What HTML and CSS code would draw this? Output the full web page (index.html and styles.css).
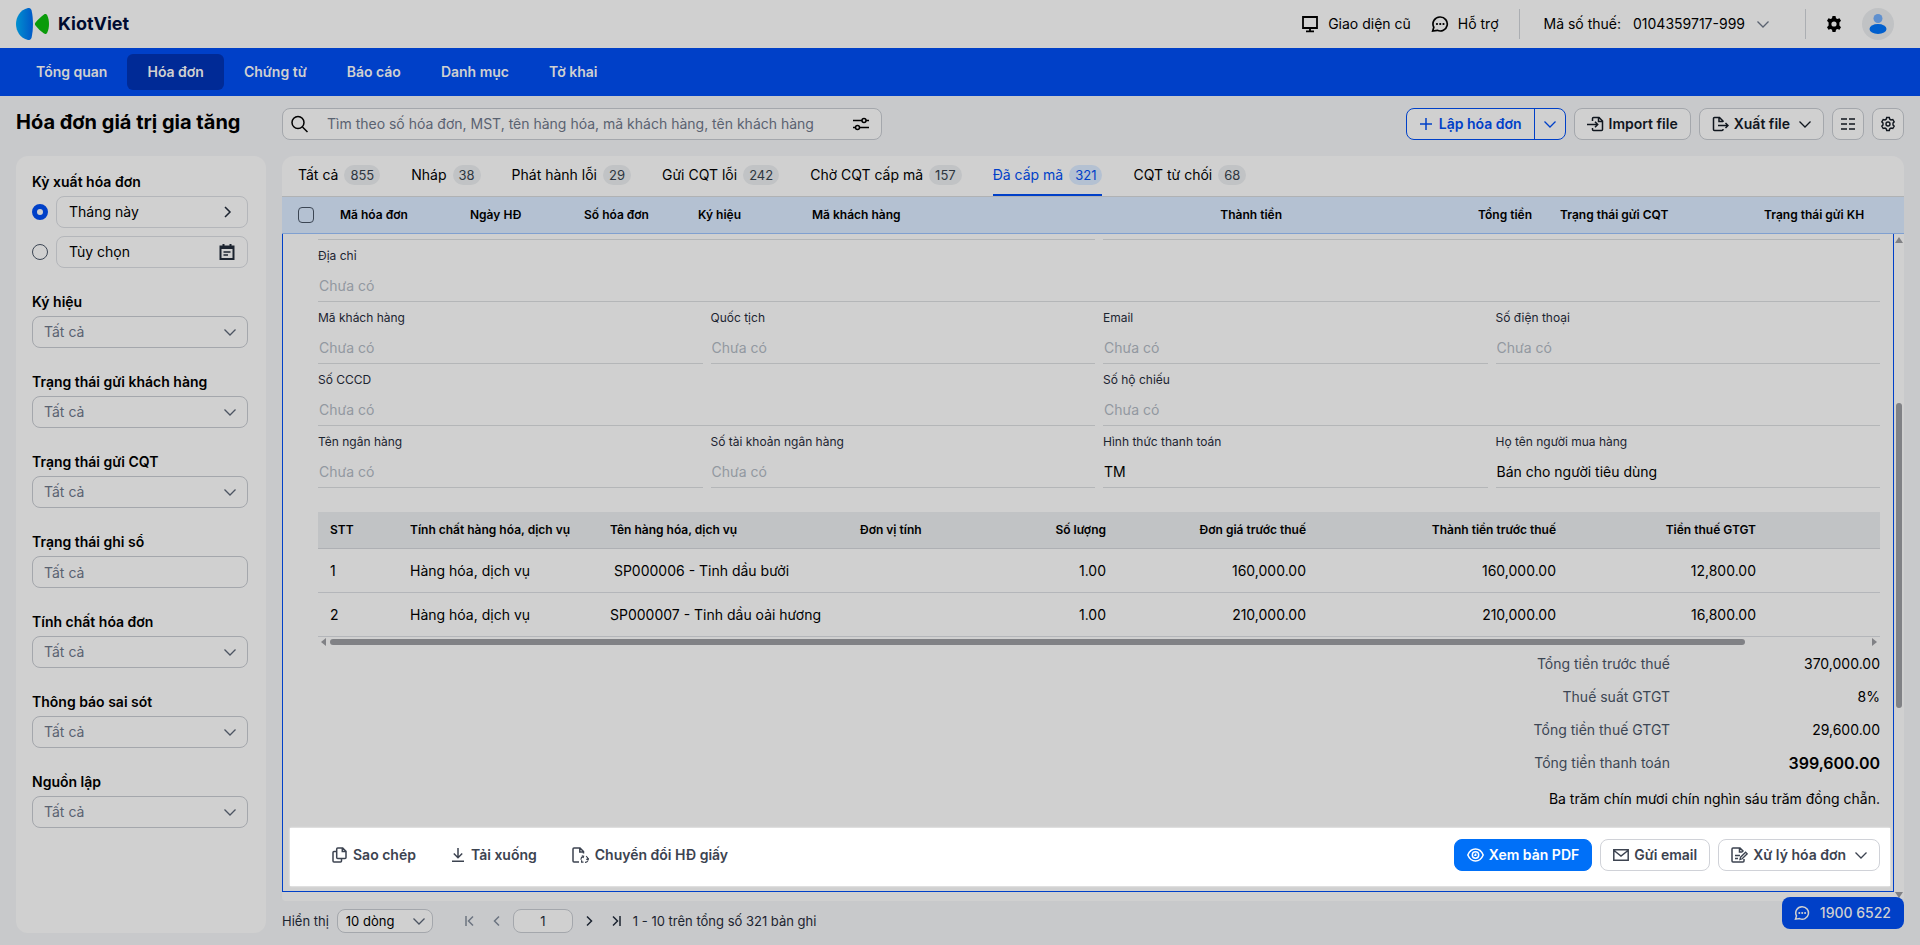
FILE: index.html
```html
<!DOCTYPE html>
<html lang="vi">
<head>
    <meta charset="UTF-8">
    <meta name="viewport" content="width=device-width, initial-scale=1.0">
    <title>Hóa đơn giá trị gia tăng</title>
    <link rel="stylesheet" href="styles.css">
</head>
<body>
    <!-- Icon dùng chung -->
    <svg class="sprite" aria-hidden="true">
        <symbol id="down" viewBox="0 0 12 12"><path d="M.5 3.500l5.500 5.500 5.500-5.500" stroke-width="1.300"/></symbol>
        <symbol id="chat" viewBox="0 0 16 16"><path d="M8.2 1.8a6.2 6.2 0 1 1-2.6 11.8L1.5 14.200l1-3.300A6.200 6.200 0 0 1 8.200 1.800z"/><path d="M5.200 8h.2M8.100 8h.2M11 8h.2" stroke-width="1.800" stroke-linecap="round"/></symbol>
    </svg>

    <header class="topbar">
        <a class="logo" href="#">
            <svg width="34" height="32" viewBox="0 0 34 32">
                <defs>
                    <linearGradient id="blue" x1="0" x2="1"><stop offset="0" stop-color="#0090cf"/><stop offset="1" stop-color="#0058c8"/></linearGradient>
                </defs>
                <path d="M12 0C4 2 0 9 0 16s4 14 12 16c2 0 3-.5 3.600-2.500 1.800-8 1.800-19 0-27C15 .500 14 0 12 0z" fill="url(#blue)"/>
                <path d="M19.500 14.500C22 11.500 25 8.500 28 6.500c1.500-.9 2.600-.5 3.300 1C32.500 10 33 13 33 16s-.5 6-1.700 8.500c-.7 1.500-1.800 1.900-3.300 1-3-2-6-5-8.500-8-.8-1-.8-2 0-3z" fill="#0a9b0a"/>
            </svg>
            <span>KiotViet</span>
        </a>
        <div class="top-right">
            <a class="top-link" href="#">
                <svg class="icon" width="18" height="18" viewBox="0 0 18 18"><path d="M2 2h14v11H2zM9 13v3M5 16.300h8" stroke-width="1.800"/></svg>
                Giao diện cũ
            </a>
            <a class="top-link" href="#"><svg class="icon" width="18" height="18"><use href="#chat"/></svg>Hỗ trợ</a>
            <span class="divider"></span>
            <button class="tax"><span>Mã số thuế:</span><span>0104359717-999</span><svg class="icon grey" width="12" height="12"><use href="#down"/></svg></button>
            <span class="divider"></span>
            <button class="plain" aria-label="Cài đặt">
                <svg width="16" height="16" viewBox="0 0 16 16"><path fill-rule="evenodd" d="M6.500 0h3l.5 2.200 1.300.7 2.200-.7L15 4.800 13.400 6.400v3.200L15 11.200l-1.500 2.600-2.200-.7-1.300.7-.5 2.200h-3L6 13.800l-1.300-.7-2.200.7L1 11.200l1.600-1.600V6.400L1 4.800l1.500-2.600 2.200.7L6 2.200zM8 5.400a2.600 2.600 0 1 0 0 5.200 2.600 2.600 0 0 0 0-5.200z"/></svg>
            </button>
            <button class="avatar" aria-label="Tài khoản">
                <svg width="32" height="32" viewBox="0 0 32 32"><circle cx="16" cy="10.500" r="4.500" fill="#5f90cf"/><ellipse cx="16" cy="21" rx="8.500" ry="5" fill="#005fce"/></svg>
            </button>
        </div>
    </header>

    <nav class="menu">
        <a href="#">Tổng quan</a>
        <a href="#" class="active">Hóa đơn</a>
        <a href="#">Chứng từ</a>
        <a href="#">Báo cáo</a>
        <a href="#">Danh mục</a>
        <a href="#">Tờ khai</a>
    </nav>

    <div class="page">
        <h1>Hóa đơn giá trị gia tăng</h1>

        <div class="toolbar">
            <div class="search">
                <svg class="icon" width="18" height="18" viewBox="0 0 18 18"><circle cx="7" cy="7.500" r="6"/><path d="M11.500 12l5 5"/></svg>
                <input type="text" aria-label="Tìm kiếm" placeholder="Tìm theo số hóa đơn, MST, tên hàng hóa, mã khách hàng, tên khách hàng">
                <button class="plain" aria-label="Bộ lọc">
                    <svg class="icon" width="16" height="14" viewBox="0 0 16 14"><path d="M0 3.500h9M13 3.500h3M0 10.500h2.500M6.500 10.500H16"/><circle cx="11" cy="3.500" r="2"/><circle cx="4.500" cy="10.500" r="2"/></svg>
                </button>
            </div>
            <div class="actions">
                <div class="split">
                    <button><svg class="icon" width="12" height="12" viewBox="0 0 12 12"><path d="M6 0v12M0 6h12"/></svg>Lập hóa đơn</button>
                    <button aria-label="Thêm lựa chọn"><svg class="icon" width="12" height="12"><use href="#down"/></svg></button>
                </div>
                <button class="btn"><svg class="icon" width="17" height="16" viewBox="0 0 17 16"><path d="M5.500 5V2.500a1 1 0 0 1 1-1h5.500L15.500 5v8.500a1 1 0 0 1-1 1h-8a1 1 0 0 1-1-1V12M11.500 1.500V5.500h4M0 8.500h10.500M8 5.800l2.700 2.700L8 11.200"/></svg>Import file</button>
                <button class="btn"><svg class="icon" width="17" height="16" viewBox="0 0 17 16"><path d="M11 6V5L7.500 1.500h-5a1 1 0 0 0-1 1v11a1 1 0 0 0 1 1H10a1 1 0 0 0 1-1V13M7 1.500V5.500h4M6 9.500h10M13.500 7l2.500 2.500-2.500 2.500"/></svg>Xuất file<svg class="icon caret" width="12" height="12"><use href="#down"/></svg></button>
                <button class="btn square" aria-label="Hiển thị cột"><svg class="icon" width="14" height="12" viewBox="0 0 14 12"><path d="M0 1h6M8 1h6M0 6h6M8 6h6M0 11h6M8 11h6" stroke-width="1.300"/></svg></button>
                <button class="btn square" aria-label="Thiết lập"><svg class="icon" width="16" height="16" viewBox="0 0 16 16"><path stroke-width="1.400" d="M6.700 1.500h2.600l.5 1.700 1.200.7 1.800-.4 1.400 2.300L13 7.100v1.800l1.200 1.300-1.400 2.300-1.800-.4-1.200.7-.5 1.700H6.700l-.5-1.700-1.200-.7-1.800.4-1.400-2.300L3 8.900V7.100L1.800 5.800l1.400-2.300 1.800.4 1.200-.7z"/><circle cx="8" cy="8" r="2" stroke-width="1.400"/></svg></button>
            </div>
        </div>

        <aside class="sidebar">
            <fieldset class="filter period">
                <legend>Kỳ xuất hóa đơn</legend>
                <div class="choice">
                    <input type="radio" name="period" aria-label="Tháng này" checked>
                    <button class="box">Tháng này<svg class="icon" width="16" height="12" viewBox="0 0 16 12"><path d="M6 1l5 5-5 5"/></svg></button>
                </div>
                <div class="choice">
                    <input type="radio" name="period" aria-label="Tùy chọn">
                    <button class="box">Tùy chọn<svg class="icon" width="16" height="16" viewBox="0 0 16 16"><path d="M1.500 2.500h13v12.500h-13zM1.500 4h13M4.500 0v3M11.500 0v3" stroke-width="2"/><path d="M4.500 8h7M4.500 11h4.500"/></svg></button>
                </div>
            </fieldset>
            <div class="filter">
                <label for="f1">Ký hiệu</label>
                <div class="select"><select id="f1"><option>Tất cả</option></select><svg class="icon" width="12" height="12"><use href="#down"/></svg></div>
            </div>
            <div class="filter">
                <label for="f2">Trạng thái gửi khách hàng</label>
                <div class="select"><select id="f2"><option>Tất cả</option></select><svg class="icon" width="12" height="12"><use href="#down"/></svg></div>
            </div>
            <div class="filter">
                <label for="f3">Trạng thái gửi CQT</label>
                <div class="select"><select id="f3"><option>Tất cả</option></select><svg class="icon" width="12" height="12"><use href="#down"/></svg></div>
            </div>
            <div class="filter">
                <label for="f4">Trạng thái ghi sổ</label>
                <div class="select"><input type="text" id="f4" placeholder="Tất cả"></div>
            </div>
            <div class="filter">
                <label for="f5">Tính chất hóa đơn</label>
                <div class="select"><select id="f5"><option>Tất cả</option></select><svg class="icon" width="12" height="12"><use href="#down"/></svg></div>
            </div>
            <div class="filter">
                <label for="f6">Thông báo sai sót</label>
                <div class="select"><select id="f6"><option>Tất cả</option></select><svg class="icon" width="12" height="12"><use href="#down"/></svg></div>
            </div>
            <div class="filter">
                <label for="f7">Nguồn lập</label>
                <div class="select"><select id="f7"><option>Tất cả</option></select><svg class="icon" width="12" height="12"><use href="#down"/></svg></div>
            </div>
        </aside>

        <main class="main">
            <div class="card">
                <div class="tabs">
                    <button>Tất cả <span>855</span></button>
                    <button>Nháp <span>38</span></button>
                    <button>Phát hành lỗi <span>29</span></button>
                    <button>Gửi CQT lỗi <span>242</span></button>
                    <button>Chờ CQT cấp mã <span>157</span></button>
                    <button class="active">Đã cấp mã <span>321</span></button>
                    <button>CQT từ chối <span>68</span></button>
                </div>

                <table class="list">
                    <thead>
                        <tr>
                            <th class="w-check"><input type="checkbox" aria-label="Chọn tất cả"></th>
                            <th class="w-code">Mã hóa đơn</th>
                            <th class="w-short">Ngày HĐ</th>
                            <th class="w-short">Số hóa đơn</th>
                            <th class="w-short">Ký hiệu</th>
                            <th>Mã khách hàng</th>
                            <th class="w-money num">Thành tiền</th>
                            <th class="w-money num">Tổng tiền</th>
                            <th class="w-status">Trạng thái gửi CQT</th>
                            <th class="w-last">Trạng thái gửi KH</th>
                        </tr>
                    </thead>
                </table>

                <div class="scroll-area">
                    <section class="detail">
                        <div class="fields">
                            <div class="field half cut"></div>
                            <div class="field half cut"></div>
                            <div class="field full"><label for="d1">Địa chỉ</label><input type="text" id="d1" placeholder="Chưa có"></div>
                            <div class="field"><label for="d2">Mã khách hàng</label><input type="text" id="d2" placeholder="Chưa có"></div>
                            <div class="field"><label for="d3">Quốc tịch</label><input type="text" id="d3" placeholder="Chưa có"></div>
                            <div class="field"><label for="d4">Email</label><input type="text" id="d4" placeholder="Chưa có"></div>
                            <div class="field"><label for="d5">Số điện thoại</label><input type="text" id="d5" placeholder="Chưa có"></div>
                            <div class="field half"><label for="d6">Số CCCD</label><input type="text" id="d6" placeholder="Chưa có"></div>
                            <div class="field half"><label for="d7">Số hộ chiếu</label><input type="text" id="d7" placeholder="Chưa có"></div>
                            <div class="field"><label for="d8">Tên ngân hàng</label><input type="text" id="d8" placeholder="Chưa có"></div>
                            <div class="field"><label for="d9">Số tài khoản ngân hàng</label><input type="text" id="d9" placeholder="Chưa có"></div>
                            <div class="field"><label for="d10">Hình thức thanh toán</label><input type="text" id="d10" value="TM"></div>
                            <div class="field"><label for="d11">Họ tên người mua hàng</label><input type="text" id="d11" value="Bán cho người tiêu dùng"></div>
                        </div>

                        <table class="items">
                            <thead>
                                <tr>
                                    <th class="c-stt">STT</th>
                                    <th class="c-200">Tính chất hàng hóa, dịch vụ</th>
                                    <th class="c-250">Tên hàng hóa, dịch vụ</th>
                                    <th class="c-unit">Đơn vị tính</th>
                                    <th class="c-qty num">Số lượng</th>
                                    <th class="c-200 num">Đơn giá trước thuế</th>
                                    <th class="c-250 num">Thành tiền trước thuế</th>
                                    <th class="c-200 num">Tiền thuế GTGT</th>
                                    <th></th>
                                </tr>
                            </thead>
                            <tbody>
                                <tr>
                                    <td>1</td>
                                    <td>Hàng hóa, dịch vụ</td>
                                    <td>&nbsp;SP000006 - Tinh dầu bưởi</td>
                                    <td></td>
                                    <td class="num">1.00</td>
                                    <td class="num">160,000.00</td>
                                    <td class="num">160,000.00</td>
                                    <td class="num">12,800.00</td>
                                    <td></td>
                                </tr>
                                <tr>
                                    <td>2</td>
                                    <td>Hàng hóa, dịch vụ</td>
                                    <td>SP000007 - Tinh dầu oải hương</td>
                                    <td></td>
                                    <td class="num">1.00</td>
                                    <td class="num">210,000.00</td>
                                    <td class="num">210,000.00</td>
                                    <td class="num">16,800.00</td>
                                    <td></td>
                                </tr>
                            </tbody>
                        </table>
                        <div class="hscroll">
                            <svg width="6" height="8" viewBox="0 0 6 8"><path d="M6 0v8L1 4z"/></svg>
                            <div class="track"><div class="thumb"></div></div>
                            <svg width="6" height="8" viewBox="0 0 6 8"><path d="M0 0v8l5-4z"/></svg>
                        </div>

                        <dl class="totals">
                            <dt>Tổng tiền trước thuế</dt><dd>370,000.00</dd>
                            <dt>Thuế suất GTGT</dt><dd>8%</dd>
                            <dt>Tổng tiền thuế GTGT</dt><dd>29,600.00</dd>
                            <dt>Tổng tiền thanh toán</dt><dd class="grand">399,600.00</dd>
                        </dl>
                        <p class="in-words">Ba trăm chín mươi chín nghìn sáu trăm đồng chẵn.</p>

                        <div class="action-bar">
                            <button class="link-btn"><svg class="icon" width="15" height="16" viewBox="0 0 15 16"><path d="M5.700 1h5L14 4.200v6.300a1 1 0 0 1-1 1H5.700a1 1 0 0 1-1-1V2a1 1 0 0 1 1-1zM10.300 1v3.500H14M4.500 4.500H2a1 1 0 0 0-1 1V14a1 1 0 0 0 1 1h6.500a1 1 0 0 0 1-1v-2.300"/></svg>Sao chép</button>
                            <button class="link-btn"><svg class="icon" width="14" height="16" viewBox="0 0 14 16"><path d="M7 1v9.500M2.800 6.500L7 10.700l4.200-4.200M1 14.300h12"/></svg>Tải xuống</button>
                            <button class="link-btn"><svg class="icon" width="17" height="16" viewBox="0 0 17 16"><path d="M7 15H2a1 1 0 0 1-1-1V2a1 1 0 0 1 1-1h6l3.500 3.500V6.500M7.800 1v4h3.700"/><path d="M9 12.800a3.300 3.300 0 0 1 2.300-3.500M9.800 8.800l1.800.4-.6 1.800M11.500 15.200H9.600v-1.900M14 9.300a3.300 3.300 0 0 1 2 3.200M16.800 11.200L16 12.900l-1.700-.8M13 15.400a3.300 3.300 0 0 0 2.800-1.400" stroke-width="1.200"/></svg>Chuyển đổi HĐ giấy</button>
                            <span class="spacer"></span>
                            <button class="btn primary"><svg class="icon" width="17" height="16" viewBox="0 0 17 16"><path d="M.8 8C2.500 4 5.300 2 8.500 2s6 2 7.700 6c-1.700 4-4.500 6-7.700 6S2.500 12 .8 8z"/><circle cx="8.500" cy="8" r="3.200"/><path d="M8.700 6.500v1.700H7.200"/></svg>Xem bản PDF</button>
                            <button class="btn light"><svg class="icon" width="16" height="12" viewBox="0 0 16 12"><path d="M.8.800h14.400v10.400H.8zM1 1.500l7 5.500 7-5.500"/></svg>Gửi email</button>
                            <button class="btn light"><svg class="icon" width="17" height="16" viewBox="0 0 17 16"><path d="M13 12v2a1 1 0 0 1-1 1H2a1 1 0 0 1-1-1V2a1 1 0 0 1 1-1h7l3.500 3.500M8.500 1v4h3M4 8.500h5M4 11.500h3"/><path d="M9 12.500l.6-2.300 5-5 1.600 1.600-5 5z" stroke-width="1.300"/></svg>Xử lý hóa đơn<svg class="icon caret" width="12" height="12"><use href="#down"/></svg></button>
                        </div>
                    </section>
                    <div class="vscroll">
                        <svg width="8" height="6" viewBox="0 0 8 6"><path d="M0 6h8L4 0z"/></svg>
                        <div class="track"><div class="thumb"></div></div>
                        <svg width="8" height="6" viewBox="0 0 8 6"><path d="M0 0h8L4 6z"/></svg>
                    </div>
                </div>
            </div>

            <div class="pager">
                <label for="size">Hiển thị</label>
                <div class="select small"><select id="size"><option>10 dòng</option></select><svg class="icon" width="12" height="12"><use href="#down"/></svg></div>
                <div class="pages">
                    <button class="plain muted" aria-label="Trang đầu"><svg class="icon" width="12" height="12" viewBox="0 0 12 12"><path d="M3 1v10M10 1.500L5.500 6l4.500 4.500"/></svg></button>
                    <button class="plain muted" aria-label="Trang trước"><svg class="icon" width="12" height="12" viewBox="0 0 12 12"><path d="M8 1.500L3.500 6 8 10.500"/></svg></button>
                    <input type="text" aria-label="Trang" value="1">
                    <button class="plain" aria-label="Trang sau"><svg class="icon" width="12" height="12" viewBox="0 0 12 12"><path d="M4 1.500L8.500 6 4 10.500"/></svg></button>
                    <button class="plain" aria-label="Trang cuối"><svg class="icon" width="12" height="12" viewBox="0 0 12 12"><path d="M2 1.500L6.500 6 2 10.500M9 1v10"/></svg></button>
                </div>
                <span>1 - 10 trên tổng số 321 bản ghi</span>
            </div>
        </main>
    </div>

    <button class="hotline"><svg class="icon" width="16" height="16"><use href="#chat"/></svg>1900 6522</button>
</body>
</html>
```
FILE: styles.css
```css
* {
    box-sizing: border-box;
}

body {
    margin: 0;
    min-height: 100vh;
    display: flex;
    flex-direction: column;
    background: #c8c9cb;
    color: #000;
    font-family: Inter, "Liberation Sans", sans-serif;
    font-size: 14px;
    line-height: 20px;
}

button, input, select {
    font: inherit;
    color: inherit;
    margin: 0;
}

button {
    cursor: pointer;
}

.sprite {
    display: none;
}

.icon {
    fill: none;
    stroke: currentColor;
    stroke-width: 1.5;
    flex: none;
}

.plain {
    display: flex;
    padding: 0;
    border: 0;
    background: none;
}

/* Thanh trên cùng */
.topbar {
    height: 48px;
    padding: 0 26px 0 16px;
    display: flex;
    align-items: center;
    justify-content: space-between;
    background: #d0d0d0;
}

.logo {
    display: flex;
    align-items: center;
    gap: 8px;
    color: #000b30;
    font-size: 18px;
    font-weight: 700;
    text-decoration: none;
}

.top-right {
    display: flex;
    align-items: center;
    gap: 20px;
}

.top-link {
    display: flex;
    align-items: center;
    gap: 9px;
    color: #000;
    text-decoration: none;
}

.divider {
    width: 1px;
    height: 30px;
    background: #abaeb2;
}

.tax {
    display: flex;
    align-items: center;
    gap: 12px;
    padding: 0 16px 0 4px;
    border: 0;
    background: none;
}

.grey {
    color: #5a6270;
}

.avatar {
    display: flex;
    width: 32px;
    height: 32px;
    padding: 0;
    border: 0;
    border-radius: 50%;
    background: #c0c2c4;
}

/* Menu chính */
.menu {
    height: 48px;
    padding: 6px 16px;
    display: flex;
    background: #0040c8;
}

.menu a {
    padding: 8px 20px;
    border-radius: 6px;
    color: #d0d0d0;
    font-weight: 600;
    text-decoration: none;
}

.menu a.active {
    background: #002a96;
}

/* Khung trang */
.page {
    flex: 1;
    display: grid;
    grid-template-columns: 250px minmax(0, 1fr);
    grid-template-rows: 32px 1fr;
    gap: 16px;
    padding: 12px 16px;
}

h1 {
    margin: 0;
    font-size: 20px;
    line-height: 28px;
    font-weight: 700;
    white-space: nowrap;
}

.toolbar, .actions {
    display: flex;
    gap: 8px;
}

.toolbar {
    justify-content: space-between;
}

.search {
    flex: 0 1 600px;
    height: 32px;
    display: flex;
    align-items: center;
    padding: 0 12px 0 8px;
    border: 1px solid #a4a7ac;
    border-radius: 8px;
    background: #d0d0d0;
}

.search input {
    flex: 1;
    padding: 0 18px;
    border: 0;
    outline: 0;
    background: none;
}

.search input::placeholder {
    color: #5a6270;
}

.btn {
    height: 32px;
    display: flex;
    align-items: center;
    gap: 5px;
    padding: 0 12px;
    border: 1px solid #a4a7ac;
    border-radius: 8px;
    background: #d0d0d0;
    color: #10161e;
    font-weight: 600;
    white-space: nowrap;
}

.caret {
    margin-left: 4px;
}

.square {
    width: 32px;
    padding: 0;
    justify-content: center;
}

.split {
    display: flex;
    height: 32px;
    border: 1px solid #0040c8;
    border-radius: 8px;
    background: #d0d0d0;
}

.split button {
    display: flex;
    align-items: center;
    gap: 7px;
    padding: 0 12px 0 13px;
    border: 0;
    background: none;
    color: #0040c8;
    font-weight: 600;
}

.split button + button {
    padding: 0 9px;
    border-left: 1px solid #0040c8;
}

/* Bộ lọc bên trái */
.sidebar {
    padding: 16px 18px 16px 16px;
    border-radius: 12px;
    background: #d0d0d0;
}

.filter {
    margin: 0 0 24px;
    padding: 0;
    border: 0;
}

.filter label, .filter legend {
    display: block;
    height: 20px;
    margin-bottom: 4px;
    padding: 0;
    font-weight: 600;
    line-height: 20px;
}

.choice {
    display: flex;
    align-items: center;
    gap: 8px;
}

.choice + .choice {
    margin-top: 8px;
}

.choice input {
    appearance: none;
    width: 16px;
    height: 16px;
    border: 1px solid #3c4654;
    border-radius: 50%;
}

.choice input:checked {
    border: 5px solid #0040c8;
}

.box {
    flex: 1;
    height: 32px;
    display: flex;
    align-items: center;
    justify-content: space-between;
    padding: 0 12px;
    border: 1px solid #b4b6ba;
    border-radius: 8px;
    background: none;
    color: #000;
}

.box .icon {
    color: #1c2430;
}

.select {
    position: relative;
}

.select select, .select input {
    appearance: none;
    display: block;
    width: 100%;
    height: 32px;
    padding: 0 11px;
    border: 1px solid #a4a7ac;
    border-radius: 8px;
    background: #d0d0d0;
    color: #5a6270;
}

.select input::placeholder {
    color: #5a6270;
}

.select .icon {
    position: absolute;
    right: 12px;
    top: 10px;
    color: #4c5462;
    pointer-events: none;
}

/* Danh sách */
.main {
    display: flex;
    flex-direction: column;
    gap: 8px;
}

.card {
    flex: 1;
    display: flex;
    flex-direction: column;
    border-radius: 12px 12px 4px 4px;
    background: #d0d0d0;
}

.tabs {
    height: 41px;
    display: flex;
    gap: 31px;
    padding: 0 16px;
    border-bottom: 1px solid #b0b2b4;
}

.tabs button {
    display: flex;
    align-items: center;
    gap: 6px;
    padding: 0;
    border: 0;
    border-bottom: 2px solid transparent;
    background: none;
    white-space: nowrap;
}

.tabs span {
    padding: 0 6px;
    border-radius: 10px;
    background: #c1c3c5;
    color: #2e3640;
    font-size: 13px;
}

.tabs .active {
    border-color: #0040c8;
    color: #0040c8;
}

.tabs .active span {
    background: #b4c1d2;
    color: #0040c8;
}

table {
    width: 100%;
    table-layout: fixed;
    border-collapse: collapse;
}

th {
    height: 36px;
    font-size: 12px;
    font-weight: 600;
    line-height: 16px;
    text-align: left;
    white-space: nowrap;
}

.num {
    text-align: right;
}

.list th {
    padding: 0 14px;
    border-bottom: 1px solid #80a0d0;
    background: #b4c1d2;
}

.list .w-check {
    width: 44px;
    padding: 0 12px 0 16px;
}

.w-code { width: 130px; }
.w-short { width: 114px; }
.w-money { width: 250px; }
.w-status { width: 204px; }
.w-last { width: 154px; }

.list input {
    appearance: none;
    display: block;
    width: 16px;
    height: 16px;
    border: 1px solid #3c4654;
    border-radius: 4px;
}

.scroll-area {
    flex: 1;
    display: flex;
    padding-bottom: 9px;
}

.detail {
    flex: 1;
    min-width: 0;
    display: flex;
    flex-direction: column;
    padding: 0 3px 5px 7px;
    border: 1px solid #0040c8;
    border-top: 0;
}

.fields {
    display: grid;
    grid-template-columns: repeat(4, 1fr);
    gap: 0 8px;
    margin: 0 10px 0 28px;
}

.field {
    height: 62px;
    padding-top: 8px;
    border-bottom: 1px solid #b4b6b8;
    line-height: 16px;
}

.half { grid-column: span 2; }
.full { grid-column: span 4; }

.cut {
    height: 6px;
    padding: 0;
}

.field label {
    display: block;
    color: #1c2430;
    font-size: 12px;
}

.field input {
    display: block;
    width: 100%;
    height: 30px;
    margin-top: 7px;
    padding: 0 1px;
    border: 0;
    outline: 0;
    background: none;
}

.field input::placeholder {
    color: #9298a0;
}

/* Bảng hàng hóa */
.items {
    width: auto;
    margin: 24px 10px 0 28px;
}

.items th {
    height: 37px;
    padding: 0 12px;
    border-bottom: 1px solid #aeb0b4;
    background: #c1c3c5;
}

.items td {
    height: 44px;
    padding: 0 12px;
    border-bottom: 1px solid #b4b6ba;
}

.c-stt { width: 80px; }
.c-200 { width: 200px; }
.c-250 { width: 250px; }
.c-unit { width: 150px; }
.c-qty { width: 120px; }

.hscroll {
    display: flex;
    align-items: center;
    gap: 4px;
    height: 10px;
    margin: 0 12px 0 30px;
}

.hscroll svg, .vscroll svg {
    flex: none;
    fill: #808185;
}

.track {
    flex: 1;
}

.thumb {
    border-radius: 3px;
    background: #808185;
}

.hscroll .thumb {
    width: 92%;
    height: 6px;
}

.vscroll {
    width: 10px;
    display: flex;
    flex-direction: column;
    align-items: center;
    padding-top: 3px;
    margin-bottom: -6px;
}

.vscroll .thumb {
    width: 6px;
    height: 47%;
    margin: 160px 0 0;
}

.totals {
    display: grid;
    grid-template-columns: 1fr 210px;
    grid-auto-rows: 33px;
    align-items: center;
    margin: 0 10px 0 28px;
    text-align: right;
}

.totals dt {
    color: #3c4654;
}

.totals dd {
    margin: 0;
}

.totals .grand {
    font-size: 16px;
    font-weight: 600;
}

.in-words {
    margin: 10px 10px 0 28px;
    text-align: right;
}

.action-bar {
    display: flex;
    align-items: center;
    gap: 8px;
    height: 58px;
    margin-top: auto;
    padding: 0 10px 4px 30px;
    background: #fff;
    box-shadow: 0 0 2px #fff;
    color: #3c4350;
}

.link-btn {
    display: flex;
    align-items: center;
    gap: 6px;
    padding: 0 12px;
    margin-right: 3px;
    border: 0;
    background: none;
    font-weight: 600;
    white-space: nowrap;
}

.spacer {
    flex: 1;
}

.light {
    border-color: #d0d2d8;
    background: #fff;
    color: #3c4350;
}

.primary {
    border-color: #0070f8;
    background: #0070f8;
    color: #fff;
}

/* Phân trang */
.pager {
    height: 24px;
    display: flex;
    align-items: center;
    gap: 8px;
    color: #1c2430;
    font-size: 13px;
}

.small {
    width: 96px;
}

.small select {
    height: 24px;
    padding: 0 8px;
    color: #000;
}

.small .icon {
    right: 8px;
    top: 6px;
}

.pages {
    display: flex;
    align-items: center;
    gap: 16px;
    padding: 0 2px 0 22px;
}

.pages input {
    width: 60px;
    height: 24px;
    margin: 0 -6px;
    border: 1px solid #a4a7ac;
    border-radius: 8px;
    background: #d0d0d0;
    text-align: center;
}

.muted {
    color: #6c7480;
}

/* Nút hỗ trợ nổi trên trang */
.hotline {
    position: fixed;
    right: 16px;
    bottom: 16px;
    height: 32px;
    display: flex;
    align-items: center;
    gap: 10px;
    padding: 0 13px 0 12px;
    border: 0;
    border-radius: 8px;
    background: #0040c8;
    color: #d0d0d0;
    font-weight: 500;
}
```
